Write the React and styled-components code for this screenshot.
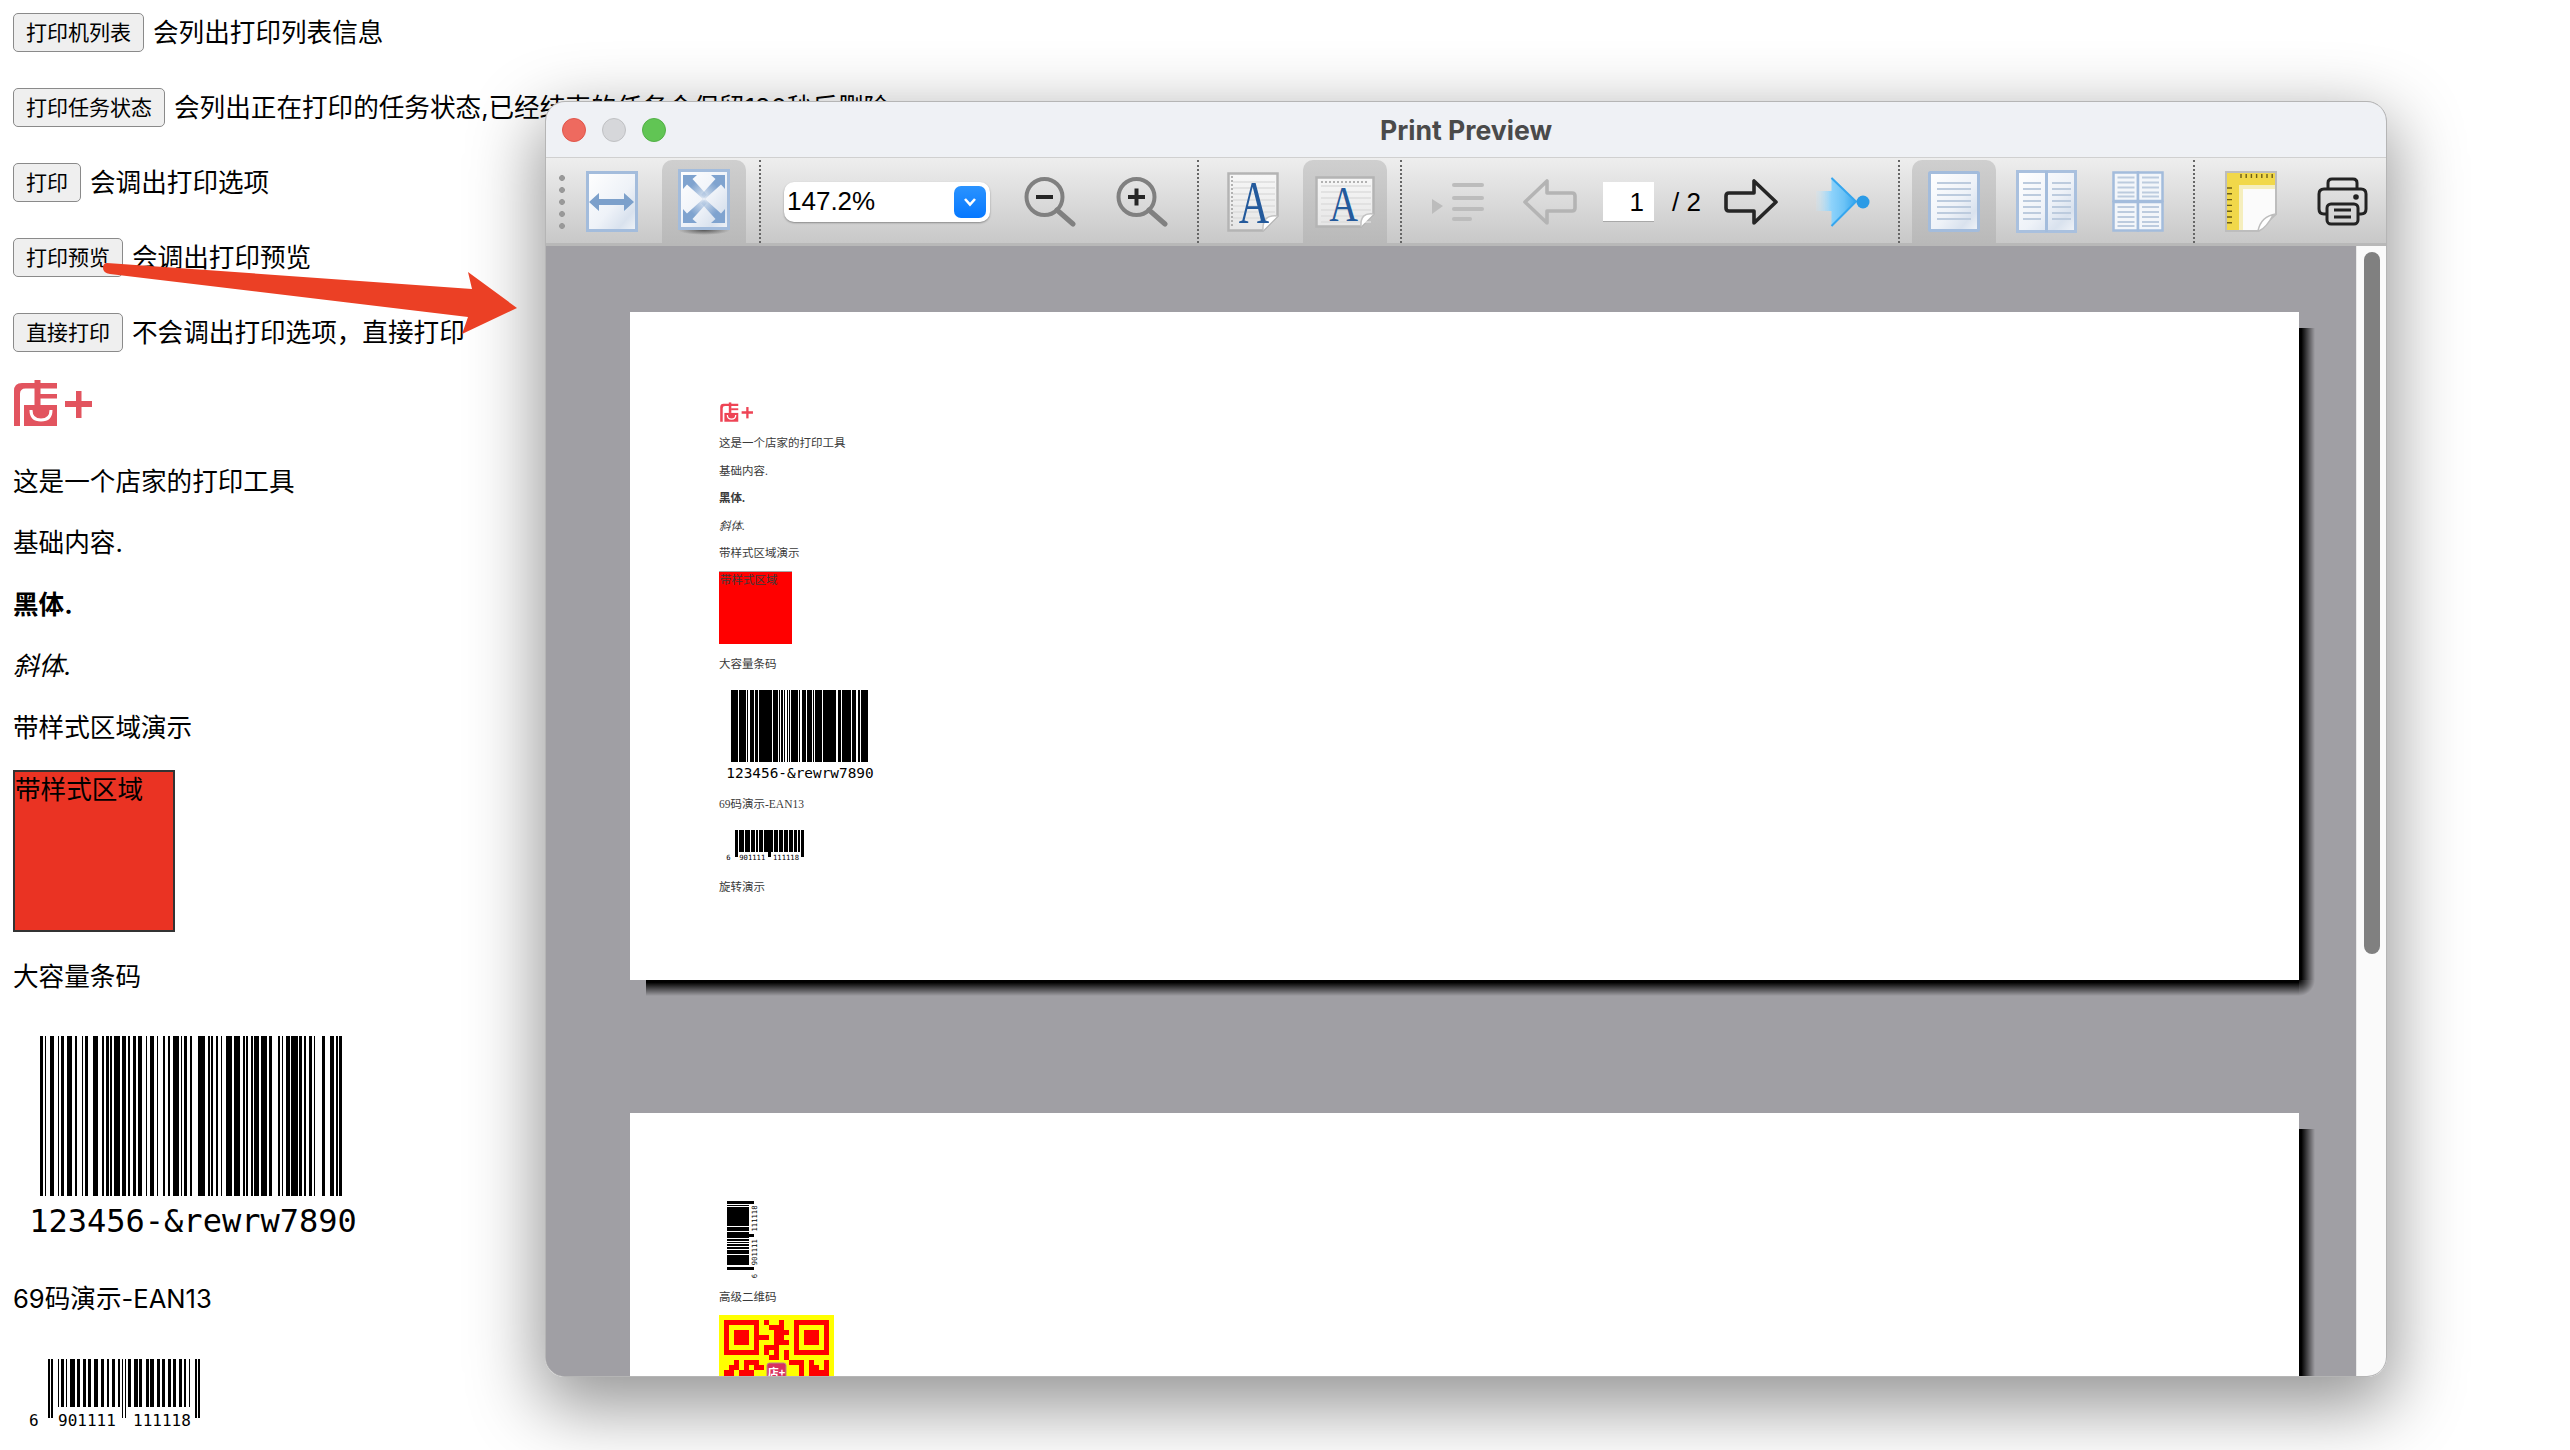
import React from "react";
import styled, { createGlobalStyle } from "styled-components";

const GlobalStyle = createGlobalStyle`
  html, body {
    margin: 0;
    padding: 0;
    background: #ffffff;
  }
`;

// --- barcode encoders, the bars in the picture are real codes ---
const CODE128 = ["212222","222122","222221","121223","121322","131222","122213","122312","132212","221213","221312","231212","112232","122132","122231","113222","123122","123221","223211","221132","221231","213212","223112","312131","311222","321122","321221","312212","322112","322211","212123","212321","232121","111323","131123","131321","112313","132113","132311","211313","231113","231311","112133","112331","132131","113123","113321","133121","313121","211331","231131","213113","213311","213131","311123","311321","331121","312113","312311","332111","314111","221411","431111","111224","111422","121124","121421","141122","141221","112214","112412","122114","122411","142112","142211","241211","221114","413111","241112","134111","111242","121142","121241","114212","124112","124211","411212","421112","421211","212141","214121","412121","111143","111341","131141","114113","114311","411113","411311","113141","114131","311141","411131","211412","211214","211232","2331112"];

function code128Runs() {
  // start C, 12 34 56, code B, -&rewrw, code C, 78 90
  const values = [105, 12, 34, 56, 100, 13, 6, 82, 69, 87, 82, 87, 99, 78, 90];
  const check = values.reduce((sum, v, i) => sum + (i === 0 ? v : v * i), 0) % 103;
  const all = [...values, check, 106];
  const runs = [];
  let x = 0;
  all.forEach((v) => {
    CODE128[v].split("").forEach((w, i) => {
      if (i % 2 === 0) runs.push({ x, w: Number(w) });
      x += Number(w);
    });
  });
  return runs;
}

const L_DIGITS = ["0001101","0011001","0010011","0111101","0100011","0110001","0101111","0111011","0110111","0001011"];
const invert = (s) => s.split("").map((c) => (c === "1" ? "0" : "1")).join("");
const reverse = (s) => s.split("").reverse().join("");

function eanRuns() {
  const left = "901111".split("").map(Number);
  const right = "111118".split("").map(Number);
  const parity = "LGGGLL";
  let bits = "101";
  left.forEach((d, i) => {
    bits += parity[i] === "L" ? L_DIGITS[d] : reverse(invert(L_DIGITS[d]));
  });
  bits += "01010";
  right.forEach((d) => {
    bits += invert(L_DIGITS[d]);
  });
  bits += "101";
  const runs = [];
  bits.split("").forEach((b, x) => {
    if (b === "1") {
      const guard = x < 3 || (x >= 45 && x < 50) || x >= 92;
      runs.push({ x, w: 1, guard });
    }
  });
  return runs;
}

const MONO = `"DejaVu Sans Mono", "Liberation Mono", monospace`;

function BigBarcode({ scale = 1, gain = 0 }) {
  const w = 345;
  const h = 210;
  return (
    <BarcodeSvg width={w * scale} height={h * scale} viewBox={`0 0 ${w} ${h}`}>
      <g shapeRendering="crispEdges">
        {code128Runs().map((r) => (
          <rect key={r.x} x={27 + r.x * 1.6} y="0" width={r.w * 1.6 + gain} height="160" fill="#000" />
        ))}
      </g>
      <text x="180" y="196" textAnchor="middle" fontFamily={MONO} fontSize="32" fill="#000">
        123456-&amp;rewrw7890
      </text>
    </BarcodeSvg>
  );
}

function EanBarcode({ scale = 1, gain = 0, rotated = false }) {
  const w = 190;
  const h = 75;
  const inner = (
    <>
      <g shapeRendering="crispEdges">
        {eanRuns().map((r) => (
          <rect key={r.x} x={35 + r.x * 1.6} y="0" width={1.6 + gain} height={r.guard ? 59 : 48} fill="#000" />
        ))}
      </g>
      <g fontFamily={MONO} fontSize="16" fill="#000">
        <text x="16" y="67">6</text>
        <text x="45" y="67">901111</text>
        <text x="120" y="67">111118</text>
      </g>
    </>
  );
  if (rotated) {
    return (
      <BarcodeSvg width={h * scale} height={w * scale} viewBox={`0 0 ${h} ${w}`}>
        <g transform={`translate(0 ${w}) rotate(-90)`}>{inner}</g>
      </BarcodeSvg>
    );
  }
  return (
    <BarcodeSvg width={w * scale} height={h * scale} viewBox={`0 0 ${w} ${h}`}>
      {inner}
    </BarcodeSvg>
  );
}

function ShopLogo({ width, height, color }) {
  return (
    <LogoSvg width={width} height={height} viewBox="0 0 82 50">
      <g fill={color}>
        <path d="M1 47V12Q1 4 9 4H44V9.5H12.5Q7 9.5 7 15V47Z" />
        <rect x="21.5" y="1" width="6" height="25" />
        <rect x="27" y="15" width="17" height="4.5" />
        <rect x="11" y="26" width="33" height="21" />
        <rect x="52" y="22" width="27" height="6" />
        <rect x="63" y="12" width="5.5" height="27" />
      </g>
      <path d="M18 31Q18 41 28 41Q38 41 38 31" fill="none" stroke="#fff" strokeWidth="3" />
    </LogoSvg>
  );
}

const QR_ROWS = [
  "111111101001001111111",
  "100000100111001000001",
  "101110100011101011101",
  "101110111011001011101",
  "101110100011101011101",
  "100000101110001000001",
  "111111101010101111111",
  "000000000110100000000",
  "001011100000011101001",
  "011010110000000101101",
  "110111000000000101111",
  "110111000000000101111",
];

function QrCode() {
  return (
    <QrSvg width="115" height="115" viewBox="0 0 115 115">
      <rect width="115" height="115" fill="#ffff00" />
      <g shapeRendering="crispEdges" fill="#ff0000">
        {QR_ROWS.map((row, r) =>
          row.split("").map((c, i) =>
            c === "1" ? <rect key={`${r}-${i}`} x={5 + i * 5} y={5 + r * 5} width="5" height="5" /> : null
          )
        )}
      </g>
      <rect x="48" y="48" width="19" height="19" rx="2.5" fill="#d9305f" stroke="#b9848f" />
      <text x="57.5" y="62" textAnchor="middle" fontSize="11" fontWeight="700" fill="#fff" fontFamily={`"Noto Sans CJK SC", sans-serif`}>
        店+
      </text>
    </QrSvg>
  );
}

// --- toolbar icons ---
const IconBlur = ({ id, amount = 0.5 }) => (
  <filter id={id} x="-10%" y="-10%" width="120%" height="120%">
    <feGaussianBlur stdDeviation={amount} />
  </filter>
);

const SheetFill = ({ id }) => (
  <linearGradient id={id} x1="0" y1="0" x2="1" y2="1">
    <stop offset="0" stopColor="#ffffff" />
    <stop offset="0.55" stopColor="#eef2f8" />
    <stop offset="0.8" stopColor="#d9e2ee" />
    <stop offset="1" stopColor="#f1f4f8" />
  </linearGradient>
);

function FitWidthIcon() {
  return (
    <svg width="52" height="61" viewBox="0 0 52 61">
      <defs>
        <SheetFill id="fw-sheet" />
        <IconBlur id="fw-blur" amount="0.6" />
      </defs>
      <rect x="1.5" y="1.5" width="49" height="58" fill="url(#fw-sheet)" stroke="#a3bcdc" strokeWidth="3" />
      <path d="M3 31L13 22V28H38V22L48 31L38 40V34H13V40Z" fill="#7ba0cb" filter="url(#fw-blur)" />
    </svg>
  );
}

function FitPageIcon() {
  const arrow = "M0 0H14L9.5 4L24 20L20 24L4 9.5L0 14Z";
  return (
    <svg width="52" height="66" viewBox="0 0 52 66">
      <defs>
        <SheetFill id="fp-sheet" />
        <IconBlur id="fp-blur" amount="0.5" />
        <radialGradient id="fp-shadow">
          <stop offset="0" stopColor="#555" />
          <stop offset="1" stopColor="#555" stopOpacity="0" />
        </radialGradient>
        <linearGradient id="fp-arrow" x1="0" y1="0" x2="1" y2="1">
          <stop offset="0" stopColor="#7fa3cf" />
          <stop offset="0.4" stopColor="#7fa3cf" />
          <stop offset="1" stopColor="#7fa3cf" stopOpacity="0.05" />
        </linearGradient>
      </defs>
      <ellipse cx="26" cy="61" rx="26" ry="5" fill="url(#fp-shadow)" />
      <rect x="1.5" y="1.5" width="49" height="58" fill="url(#fp-sheet)" stroke="#a3bcdc" strokeWidth="3" />
      <g fill="url(#fp-arrow)" filter="url(#fp-blur)">
        <path d={arrow} transform="translate(5 6)" />
        <path d={arrow} transform="translate(47 6) scale(-1 1)" />
        <path d={arrow} transform="translate(5 54) scale(1 -1)" />
        <path d={arrow} transform="translate(47 54) scale(-1 -1)" />
      </g>
    </svg>
  );
}

function MagnifierIcon({ plus }) {
  return (
    <svg width="52" height="50" viewBox="0 0 52 50" fill="none">
      <circle cx="20.5" cy="20" r="18" stroke="#808080" strokeWidth="4" />
      <path d="M33 33L49 47" stroke="#808080" strokeWidth="5" strokeLinecap="round" />
      <path d="M12 20H29" stroke="#262626" strokeWidth="4" />
      {plus && <path d="M20.5 11.5V28.5" stroke="#262626" strokeWidth="4" />}
    </svg>
  );
}

function LetterIcon({ variant }) {
  const id = `letter-${variant}`;
  const marginLeft = variant === "left";
  const w = marginLeft ? 52 : 60;
  const h = marginLeft ? 60 : 52;
  const fold = marginLeft ? 16 : 14;
  const letterX = marginLeft ? 27 : 28.5;
  const letterY = marginLeft ? 51 : 45;
  const letterSize = marginLeft ? 62 : 51;
  const letterStretch = marginLeft ? 0.68 : 0.78;
  return (
    <svg width={w} height={h} viewBox={`0 0 ${w} ${h}`} overflow="visible">
      <defs>
        <linearGradient id={id} x1="0" y1="0" x2="0" y2="1">
          <stop offset="0" stopColor="#f7f7f7" />
          <stop offset="1" stopColor="#e6e6e6" />
        </linearGradient>
      </defs>
      <path
        d={`M1.5 1.5H${w - 1.5}V${h - fold}L${w - fold} ${h - 1.5}H1.5Z`}
        fill={`url(#${id})`}
        stroke="#b4b4b4"
        strokeWidth="2.5"
      />
      <g stroke="#dcdcdc" strokeWidth="1.5">
        {[10, 16, 22, 28, 34, 40, 46].map((y) => (
          <path key={y} d={`M6 ${y}H${w - 4}`} />
        ))}
      </g>
      {marginLeft ? (
        <path d="M5 4V56" stroke="#9c9c9c" strokeWidth="1.5" strokeDasharray="2 2" />
      ) : (
        <path d="M6 6H54" stroke="#9c9c9c" strokeWidth="1.5" strokeDasharray="2 2" />
      )}
      <path
        d={`M${w - fold} ${h - 1.5}Q${w - fold - 1} ${h - fold - 2} ${w - 1.5} ${h - fold}`}
        fill="#fff"
        stroke="#c2c2c2"
        strokeWidth="1.5"
      />
      <text
        transform={`translate(${letterX} ${letterY}) scale(${letterStretch} 1)`}
        textAnchor="middle"
        fontFamily={`"Liberation Serif", serif`}
        fontSize={letterSize}
        fill="#245a9c"
      >
        A
      </text>
    </svg>
  );
}

function ListIcon() {
  return (
    <svg width="52" height="38" viewBox="0 0 52 38" fill="#bcbcbc">
      <path d="M0 16L11 23L0 31Z" />
      <rect x="20" y="0" width="32" height="4" rx="2" />
      <rect x="20" y="13" width="32" height="4" rx="2" />
      <rect x="20" y="24" width="32" height="4" rx="2" />
      <rect x="20" y="34" width="20" height="4" rx="2" />
    </svg>
  );
}

function NavArrow({ back }) {
  const color = back ? "#b4b4b4" : "#262626";
  return (
    <svg width="54" height="46" viewBox="0 0 54 46" fill="none">
      <path
        d="M2 23L24 2V14H49Q52 14 52 17V29Q52 32 49 32H24V44Z"
        stroke={color}
        strokeWidth="3.6"
        strokeLinejoin="round"
        transform={back ? undefined : "translate(54 0) scale(-1 1)"}
      />
    </svg>
  );
}

function GoToIcon() {
  return (
    <svg width="54" height="50" viewBox="0 0 54 50">
      <defs>
        <linearGradient id="go-fill" x1="0" y1="0" x2="1" y2="0">
          <stop offset="0" stopColor="#c4e8fc" stopOpacity="0.15" />
          <stop offset="0.38" stopColor="#8fd3fb" />
          <stop offset="0.7" stopColor="#6cc3f6" />
          <stop offset="1" stopColor="#34a5ee" />
        </linearGradient>
        <IconBlur id="go-blur" amount="0.5" />
      </defs>
      <path d="M15.5 0L40 24.5L15.5 49V34H0V14H15.5Z" fill="url(#go-fill)" filter="url(#go-blur)" />
      <path d="M15.5 1L40 24.5L15.5 49" fill="none" stroke="#36a6ee" strokeWidth="2" />
      <circle cx="47" cy="25" r="6.5" fill="#2b9be6" />
    </svg>
  );
}

const Lines = ({ x, x2, ys, color = "#bccbde" }) => (
  <g stroke={color} strokeWidth="2">
    {ys.map((y) => (
      <path key={y} d={`M${x} ${y}H${x2}`} />
    ))}
  </g>
);

function SinglePageIcon() {
  return (
    <svg width="52" height="61" viewBox="0 0 52 61">
      <defs>
        <SheetFill id="sp-sheet" />
      </defs>
      <rect x="1.5" y="1.5" width="49" height="58" rx="1" fill="url(#sp-sheet)" stroke="#a3bcdc" strokeWidth="3" />
      <Lines x={9} x2={43} ys={[12, 18, 24, 30, 36, 42, 48]} />
    </svg>
  );
}

function TwoPagesIcon() {
  return (
    <svg width="61" height="63" viewBox="0 0 61 63">
      <defs>
        <SheetFill id="tp-sheet" />
      </defs>
      <rect x="1.5" y="1.5" width="58" height="60" fill="url(#tp-sheet)" stroke="#a9c0de" strokeWidth="3" />
      <path d="M30.5 1V62" stroke="#a3bcdc" strokeWidth="3" />
      <Lines x={7} x2={25} ys={[13, 19, 25, 31, 37, 43, 49]} />
      <Lines x={36} x2={55} ys={[13, 19, 25, 31, 37, 43, 49]} />
    </svg>
  );
}

function FourPagesIcon() {
  const cell = (x, y) => (
    <g key={`${x}-${y}`}>
      <rect x={x} y={y} width="24.5" height="28.5" fill="#f3f6fa" stroke="#a3bcdc" strokeWidth="2.5" />
      <Lines x={x + 4} x2={x + 21} ys={[5, 10, 15, 20, 24].map((n) => y + n)} />
    </g>
  );
  return (
    <svg width="52" height="61" viewBox="0 0 52 61">
      {cell(1.5, 1.5)}
      {cell(26, 1.5)}
      {cell(1.5, 31)}
      {cell(26, 31)}
    </svg>
  );
}

function PageSetupIcon() {
  const marks = [];
  for (let i = 0; i < 7; i++) {
    marks.push(<path key={`t${i}`} d={`M${16 + i * 5.2} 3V7`} />);
    marks.push(<path key={`l${i}`} d={`M2 ${17 + i * 5.8}H7`} />);
  }
  return (
    <svg width="52" height="61" viewBox="0 0 52 61">
      <path d="M1 1H51V43L33 60H1Z" fill="#fbfbfb" stroke="#bdbdbd" strokeWidth="2" />
      <path d="M2 2H50V14H14V59H2Z" fill="#f1d84a" />
      <path d="M14 14H50V18H18V59H14Z" fill="#f5eebd" />
      <g stroke="#6e5f16" strokeWidth="1.4">{marks}</g>
      <path d="M33 60Q36 45 51 43L48 44Q42 56 34 60Z" fill="#fff" stroke="#bdbdbd" strokeWidth="1.5" />
    </svg>
  );
}

function PrinterIcon() {
  return (
    <svg width="52" height="49" viewBox="0 0 52 49" fill="none" stroke="#232323" strokeWidth="3">
      <path d="M11 12V6Q11 2 15 2H36Q40 2 40 6V12" />
      <path d="M10 37H7Q2 37 2 32V17Q2 12 7 12H44Q49 12 49 17V32Q49 37 44 37H41" />
      <rect x="10" y="27" width="31" height="20" rx="4" />
      <path d="M17 33H34M17 40H34" />
      <circle cx="39" cy="20" r="2.8" fill="#232323" stroke="none" />
    </svg>
  );
}

// --- page ---
const Desktop = styled.div`
  position: relative;
  width: 100%;
  height: 1450px;
  overflow: hidden;
  background: #ffffff;
  color: #000000;
  font-family: Inter, "Noto Sans CJK SC", sans-serif;
  font-size: 25.6px;
  line-height: 36px;
`;

const DemoColumn = styled.div`
  padding: 13px 0 0 13px;
`;

const ActionRow = styled.div`
  display: flex;
  align-items: center;
  gap: 9px;
  height: 39px;
  margin-bottom: 36px;
  white-space: nowrap;
`;

const ActionButton = styled.button`
  height: 39px;
  padding: 0 12px;
  font-family: inherit;
  font-size: 21px;
  line-height: 1;
  color: #000000;
  background: #efefef;
  border: 1.5px solid #8a8a8a;
  border-radius: 5px;
`;

const LogoSvg = styled.svg`
  display: block;
`;

const LogoSlot = styled.div`
  margin: -9.5px 0 35px;
  height: 50px;
`;

const Paragraph = styled.p`
  margin: 0 0 25.6px;
  font-weight: ${(p) => (p.$bold ? 700 : 400)};
  font-style: ${(p) => (p.$italic ? "italic" : "normal")};
`;

const StyledArea = styled.div`
  box-sizing: border-box;
  width: 162px;
  height: 162px;
  margin: -1.5px 0 27px;
  border: 2px solid #333333;
  background: #ea3323;
`;

const BarcodeSvg = styled.svg`
  display: block;
`;

const BigCodeSlot = styled.div`
  margin: 41px 0 35px;
`;

const SmallCodeSlot = styled.div`
  margin-top: 42px;
`;

const Arrow = styled.svg`
  position: absolute;
  left: 0;
  top: 0;
  z-index: 3;
`;

const PreviewWindow = styled.div`
  position: absolute;
  z-index: 2;
  left: 545px;
  top: 101px;
  box-sizing: border-box;
  width: 1842px;
  height: 1276px;
  display: flex;
  flex-direction: column;
  overflow: hidden;
  border: 1px solid #b5b5b5;
  border-radius: 20px;
  background: #a09fa4;
`;

const WindowShadow = styled.div`
  position: absolute;
  z-index: 1;
  left: 545px;
  top: 101px;
  width: 1842px;
  height: 1276px;
  border-radius: 20px;
  box-shadow: 0 24px 70px 6px rgba(0, 0, 0, 0.42);
`;

const TitleBar = styled.div`
  display: grid;
  grid-template-columns: 1fr auto 1fr;
  align-items: center;
  height: 56px;
  flex: none;
  padding-left: 16px;
  background: #eff1f5;
  border-bottom: 1px solid #d0d0d0;
  box-sizing: border-box;
`;

const Lights = styled.div`
  display: flex;
  gap: 16px;
`;

const Light = styled.span`
  width: 24px;
  height: 24px;
  box-sizing: border-box;
  border-radius: 50%;
  background: ${(p) => p.$color};
  border: 1px solid ${(p) => p.$edge};
`;

const WindowTitle = styled.div`
  font-size: 26.6px;
  font-weight: 700;
  color: #4a4a4a;
  line-height: 56px;
  margin-right: 16px;
`;

const Toolbar = styled.div`
  display: flex;
  align-items: center;
  flex: none;
  height: 88px;
  box-sizing: border-box;
  padding: 2px 0 0 13px;
  background: linear-gradient(#eeeeee, #c8c8c8);
  border-bottom: 3px solid #b8b8b8;
`;

const Grip = styled.div`
  flex: none;
  width: 6px;
  height: 60px;
  margin-right: 1px;
  background: radial-gradient(circle, #999999 2.6px, transparent 3.2px) 0 0 / 6px 12px;
`;

const ToolButton = styled.div`
  display: flex;
  align-items: center;
  justify-content: center;
  flex: none;
  width: 84px;
  height: 83px;
  margin: 0 4px 0 ${(p) => p.$lead || 4}px;
  border-radius: 10px 10px 0 0;
  background: ${(p) => (p.$active ? "linear-gradient(#cfcfcf, #b9b9b9)" : "transparent")};
`;

const ToolSeparator = styled.div`
  flex: none;
  height: 83px;
  margin: 0 8px 0 9px;
  border-left: 2px dotted #666666;
`;

const ZoomCombo = styled.div`
  display: flex;
  align-items: center;
  justify-content: space-between;
  flex: none;
  box-sizing: border-box;
  width: 206px;
  height: 40px;
  margin: 0 14px 0 15px;
  padding: 0 4px 0 3px;
  background: #ffffff;
  border-radius: 10px;
  box-shadow: 0 1px 2px rgba(0, 0, 0, 0.35);
  font-family: "Liberation Sans", sans-serif;
  font-size: 26px;
`;

const ZoomValue = styled.span`
  margin-top: -2px;
`;

const ComboArrow = styled.span`
  display: flex;
  align-items: center;
  justify-content: center;
  width: 32px;
  height: 32px;
  border-radius: 7px;
  background: linear-gradient(#2a93ff, #0678ff);
`;

const PageField = styled.div`
  flex: none;
  box-sizing: border-box;
  width: 51px;
  height: 40px;
  margin-left: 7px;
  padding-right: 10px;
  text-align: right;
  font-family: "Liberation Sans", sans-serif;
  font-size: 26px;
  line-height: 40px;
  background: #ffffff;
  border-bottom: 1px solid #a8a8a8;
`;

const PageTotal = styled.div`
  flex: none;
  width: 30px;
  margin: 0 3px 0 18px;
  font-family: "Liberation Sans", sans-serif;
  font-size: 26px;
  white-space: nowrap;
`;

const PreviewBody = styled.div`
  display: flex;
  flex: 1;
  min-height: 0;
`;

const PreviewViewport = styled.div`
  position: relative;
  z-index: 0;
  flex: 1;
  overflow: hidden;
  padding: 66px 0 0 84px;
  background: #a09fa4;
`;

const Sheet = styled.div`
  position: relative;
  box-sizing: border-box;
  width: 1669px;
  height: 668px;
  margin-bottom: 133px;
  padding: ${(p) => p.$top}px 0 0 89px;
  background: #ffffff;
  font-family: "Liberation Serif", "Noto Sans CJK SC", serif;
  font-size: 11.5px;
  line-height: 16px;
  color: #3a3a3a;

  &::after {
    content: "";
    position: absolute;
    z-index: -1;
    left: 16px;
    top: 16px;
    right: -16px;
    bottom: -16px;
    background:
      linear-gradient(to right, #000 0, #000 15%, rgba(0, 0, 0, 0) 100%) right top / 16px calc(100% - 16px) no-repeat,
      linear-gradient(to bottom, #000 0, #000 15%, rgba(0, 0, 0, 0) 100%) left bottom / calc(100% - 16px) 16px no-repeat,
      radial-gradient(circle at 0 0, #000 0, rgba(0, 0, 0, 0) 16px) right bottom / 16px 16px no-repeat;
  }
`;

const SheetLine = styled.p`
  margin: 0 0 ${(p) => (p.$gap === undefined ? 11.5 : p.$gap)}px;
  font-weight: ${(p) => (p.$bold ? 700 : 400)};
  font-style: ${(p) => (p.$italic ? "italic" : "normal")};
`;

const SheetLogo = styled.div`
  margin-bottom: 12px;
  height: 21px;
`;

const SheetArea = styled.div`
  box-sizing: border-box;
  width: 73px;
  height: 73px;
  margin-bottom: 12px;
  padding-left: 1px;
  background: #ff0000;
  border-top: 1px solid #a8a8a8;
`;

const SheetCode = styled.div`
  margin-bottom: ${(p) => p.$gap}px;
`;

const RotatedCode = styled.div`
  margin: 0 0 3px 8px;
`;

const QrSvg = styled.svg`
  display: block;
`;

const ScrollTrack = styled.div`
  flex: none;
  box-sizing: border-box;
  width: 30px;
  padding: 6px 6px 0 7px;
  background: #fafafa;
  border-left: 1px solid #e8e8e8;
`;

const ScrollThumb = styled.div`
  height: 702px;
  border-radius: 8px;
  background: #808080;
`;

export default function App() {
  return (
    <>
      <GlobalStyle />
      <Desktop>
        <DemoColumn>
          <ActionRow>
            <ActionButton>打印机列表</ActionButton>
            <span>会列出打印列表信息</span>
          </ActionRow>
          <ActionRow>
            <ActionButton>打印任务状态</ActionButton>
            <span>会列出正在打印的任务状态,已经结束的任务会保留180秒后删除</span>
          </ActionRow>
          <ActionRow>
            <ActionButton>打印</ActionButton>
            <span>会调出打印选项</span>
          </ActionRow>
          <ActionRow>
            <ActionButton>打印预览</ActionButton>
            <span>会调出打印预览</span>
          </ActionRow>
          <ActionRow>
            <ActionButton>直接打印</ActionButton>
            <span>不会调出打印选项，直接打印</span>
          </ActionRow>
          <LogoSlot>
            <ShopLogo width={82} height={50} color="#e2545f" />
          </LogoSlot>
          <Paragraph>这是一个店家的打印工具</Paragraph>
          <Paragraph>基础内容.</Paragraph>
          <Paragraph $bold>黑体.</Paragraph>
          <Paragraph $italic>斜体.</Paragraph>
          <Paragraph>带样式区域演示</Paragraph>
          <StyledArea>带样式区域</StyledArea>
          <Paragraph>大容量条码</Paragraph>
          <BigCodeSlot>
            <BigBarcode />
          </BigCodeSlot>
          <Paragraph>69码演示-EAN13</Paragraph>
          <SmallCodeSlot>
            <EanBarcode />
          </SmallCodeSlot>
        </DemoColumn>

        <WindowShadow />
        <PreviewWindow>
          <TitleBar>
            <Lights>
              <Light $color="#ee6a5f" $edge="#e0554a" />
              <Light $color="#d6d7da" $edge="#bfc0c3" />
              <Light $color="#61c554" $edge="#52b046" />
            </Lights>
            <WindowTitle>Print Preview</WindowTitle>
          </TitleBar>
          <Toolbar>
            <Grip />
            <ToolButton><FitWidthIcon /></ToolButton>
            <ToolButton $active><FitPageIcon /></ToolButton>
            <ToolSeparator />
            <ZoomCombo>
              <ZoomValue>147.2%</ZoomValue>
              <ComboArrow>
                <svg width="14" height="10" viewBox="0 0 14 10" fill="none">
                  <path d="M2 2L7 7.5L12 2" stroke="#fff" strokeWidth="2.6" />
                </svg>
              </ComboArrow>
            </ZoomCombo>
            <ToolButton><MagnifierIcon /></ToolButton>
            <ToolButton><MagnifierIcon plus /></ToolButton>
            <ToolSeparator />
            <ToolButton><LetterIcon variant="left" /></ToolButton>
            <ToolButton $active><LetterIcon variant="top" /></ToolButton>
            <ToolSeparator />
            <ToolButton $lead={6}><ListIcon /></ToolButton>
            <ToolButton><NavArrow back /></ToolButton>
            <PageField>1</PageField>
            <PageTotal>/ 2</PageTotal>
            <ToolButton><NavArrow /></ToolButton>
            <ToolButton><GoToIcon /></ToolButton>
            <ToolSeparator />
            <ToolButton $active><SinglePageIcon /></ToolButton>
            <ToolButton><TwoPagesIcon /></ToolButton>
            <ToolButton><FourPagesIcon /></ToolButton>
            <ToolSeparator />
            <ToolButton $lead={6}><PageSetupIcon /></ToolButton>
            <ToolButton><PrinterIcon /></ToolButton>
          </Toolbar>
          <PreviewBody>
            <PreviewViewport>
              <Sheet $top={90}>
                <SheetLogo>
                  <ShopLogo width={36} height={21} color="#ee4455" />
                </SheetLogo>
                <SheetLine>这是一个店家的打印工具</SheetLine>
                <SheetLine>基础内容.</SheetLine>
                <SheetLine $bold>黑体.</SheetLine>
                <SheetLine $italic>斜体.</SheetLine>
                <SheetLine $gap={10}>带样式区域演示</SheetLine>
                <SheetArea>带样式区域</SheetArea>
                <SheetLine $gap={18}>大容量条码</SheetLine>
                <SheetCode $gap={11}>
                  <BigBarcode scale={0.45} gain={1.7} />
                </SheetCode>
                <SheetLine $gap={18}>69码演示-EAN13</SheetLine>
                <SheetCode $gap={16}>
                  <EanBarcode scale={0.45} gain={1.7} />
                </SheetCode>
                <SheetLine>旋转演示</SheetLine>
              </Sheet>
              <Sheet $top={87}>
                <RotatedCode>
                  <EanBarcode scale={0.45} gain={1.7} rotated />
                </RotatedCode>
                <SheetLine $gap={10}>高级二维码</SheetLine>
                <QrCode />
              </Sheet>
            </PreviewViewport>
            <ScrollTrack>
              <ScrollThumb />
            </ScrollTrack>
          </PreviewBody>
        </PreviewWindow>

        <Arrow width="530" height="340" viewBox="0 0 530 340">
          <path
            d="M107 263L472 289L468 272L517 308L462 334L468 317L110 274Q103 273 103 268Q103 263 107 263Z"
            fill="#eb4025"
          />
        </Arrow>
      </Desktop>
    </>
  );
}
